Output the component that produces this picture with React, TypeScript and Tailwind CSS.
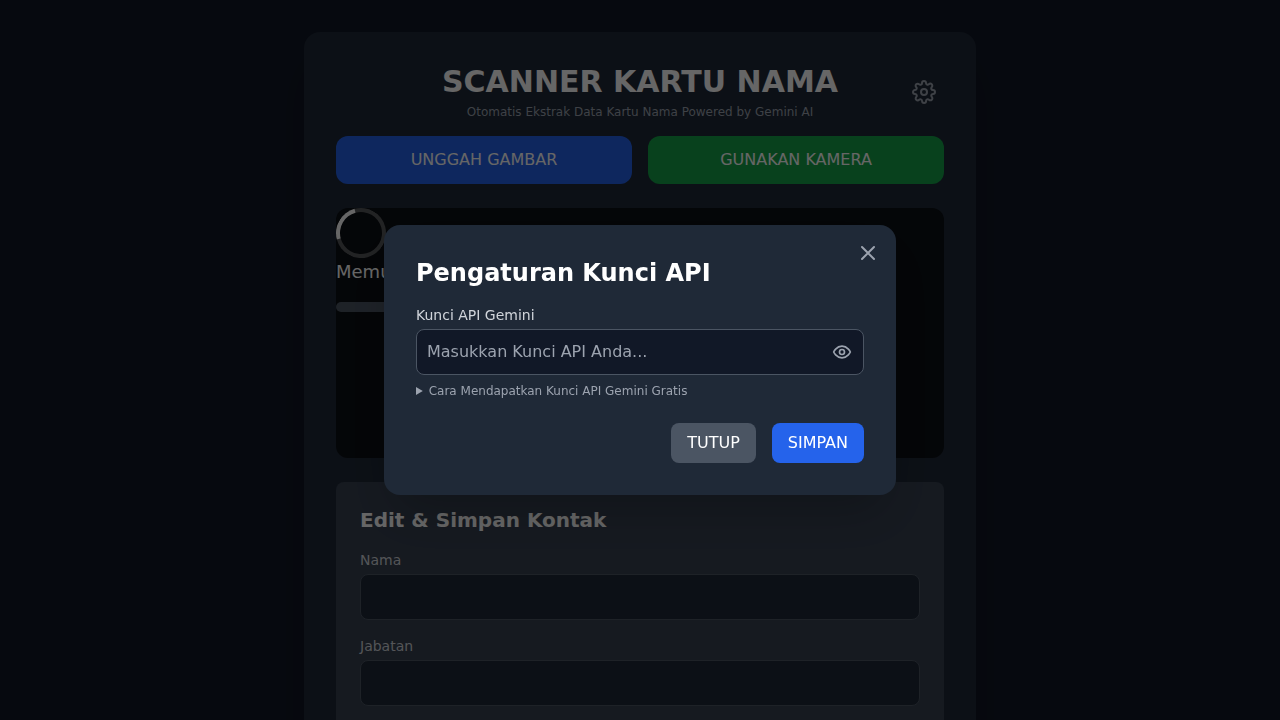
import React from "react";

type IconProps = { className: string; paths: string[] };

function Icon({ className, paths }: IconProps) {
  return (
    <svg className={className} fill="none" viewBox="0 0 24 24" stroke="currentColor" strokeWidth={2} strokeLinecap="round" strokeLinejoin="round">
      {paths.map((d) => (
        <path key={d} d={d} />
      ))}
    </svg>
  );
}

const GEAR = [
  "M15 12a3 3 0 11-6 0 3 3 0 016 0z",
  "M19.4 15a1.65 1.65 0 0 0 .33 1.82l.06.06a2 2 0 0 1 0 2.83 2 2 0 0 1-2.83 0l-.06-.06a1.65 1.65 0 0 0-1.82-.33 1.65 1.65 0 0 0-1 1.51V21a2 2 0 0 1-2 2 2 2 0 0 1-2-2v-.09A1.65 1.65 0 0 0 9 19.4a1.65 1.65 0 0 0-1.82.33l-.06.06a2 2 0 0 1-2.83 0 2 2 0 0 1 0-2.83l.06-.06a1.65 1.65 0 0 0 .33-1.82 1.65 1.65 0 0 0-1.51-1H3a2 2 0 0 1-2-2 2 2 0 0 1 2-2h.09A1.65 1.65 0 0 0 4.6 9a1.65 1.65 0 0 0-.33-1.82l-.06-.06a2 2 0 0 1 0-2.83 2 2 0 0 1 2.83 0l.06.06a1.65 1.65 0 0 0 1.82.33H9a1.65 1.65 0 0 0 1-1.51V3a2 2 0 0 1 2-2 2 2 0 0 1 2 2v.09a1.65 1.65 0 0 0 1 1.51 1.65 1.65 0 0 0 1.82-.33l.06-.06a2 2 0 0 1 2.83 0 2 2 0 0 1 0 2.83l-.06.06a1.65 1.65 0 0 0-.33 1.82V9a1.65 1.65 0 0 0 1.51 1H21a2 2 0 0 1 2 2 2 2 0 0 1-2 2h-.09a1.65 1.65 0 0 0-1.51 1z",
];
const EYE = [
  "M2 12s3-7 10-7 10 7 10 7-3 7-10 7-10-7-10-7Z",
  "M15 12a3 3 0 1 1-6 0 3 3 0 0 1 6 0Z",
];
const CLOSE = ["M6 18L18 6M6 6l12 12"];

function Field({ label }: { label: string }) {
  return (
    <div>
      <label className="mb-1 block text-sm text-[#d1d5db]">{label}</label>
      <input type="text" className="block w-full rounded-lg border border-[#4b5563] bg-[#1f2937] p-2.5" />
    </div>
  );
}

function SettingsDialog() {
  return (
    <div className="fixed inset-0 z-50 flex items-center justify-center bg-black/60 p-4">
      <div className="relative w-full max-w-lg rounded-2xl bg-[#1f2937] p-8 shadow-2xl">
        <button className="absolute top-4 right-4 text-[#9ca3af]" aria-label="Tutup">
          <Icon className="h-6 w-6" paths={CLOSE} />
        </button>
        <h2 className="mb-4 text-2xl font-bold text-white">Pengaturan Kunci API</h2>
        <label className="mb-1 block text-sm text-[#d1d5db]">Kunci API Gemini</label>
        <div className="relative">
          <input
            type="password"
            placeholder="Masukkan Kunci API Anda..."
            className="block w-full rounded-lg border border-[#4b5563] bg-[#111827] p-2.5 pr-10 text-white placeholder:text-[#9ca3af]"
          />
          <button className="absolute inset-y-0 right-0 flex items-center px-3 text-[#9ca3af]" aria-label="Tampilkan">
            <Icon className="h-5 w-5" paths={EYE} />
          </button>
        </div>
        <details className="mt-2 text-xs text-[#9ca3af]">
          <summary>Cara Mendapatkan Kunci API Gemini Gratis</summary>
        </details>
        <div className="mt-6 flex justify-end gap-4">
          <button className="rounded-lg bg-[#4b5563] px-4 py-2 text-white">TUTUP</button>
          <button className="rounded-lg bg-[#2563eb] px-4 py-2 text-white">SIMPAN</button>
        </div>
      </div>
    </div>
  );
}

export default function App() {
  return (
    <div className="h-screen overflow-hidden bg-[#111827] px-4 pt-8 font-['DejaVu_Sans',sans-serif] text-white">
      <main className="mx-auto max-w-2xl rounded-2xl bg-[#1f2937] p-8 shadow-2xl">
        <header className="relative mb-4 text-center">
          <h1 className="text-3xl font-bold">SCANNER KARTU NAMA</h1>
          <p className="mt-1 text-xs text-[#9ca3af]">Otomatis Ekstrak Data Kartu Nama Powered by Gemini AI</p>
          <button className="absolute inset-y-0 right-0 flex items-center p-2 text-[#9ca3af]" aria-label="Pengaturan">
            <Icon className="h-6 w-6" paths={GEAR} />
          </button>
        </header>
        <div className="grid grid-cols-2 gap-4">
          <button className="rounded-xl bg-[#2563eb] px-6 py-3">UNGGAH GAMBAR</button>
          <button className="rounded-xl bg-[#16a34a] px-6 py-3">GUNAKAN KAMERA</button>
        </div>
        <div className="mt-6 h-[250px] overflow-hidden rounded-xl bg-[#0c0f14]">
          <div className="h-[50px] w-[50px] rotate-[30deg] rounded-full border-4 border-white/30 border-l-white" />
          <p className="text-lg">Memuat...</p>
          <div className="mt-4 h-2.5 w-4/5 rounded-full bg-[#4b5563]" />
        </div>
        <section className="mt-6 rounded-lg bg-[#374151] p-6">
          <h2 className="mb-4 text-xl font-bold">Edit &amp; Simpan Kontak</h2>
          <div className="flex flex-col gap-4">
            <Field label="Nama" />
            <Field label="Jabatan" />
          </div>
        </section>
      </main>
      <SettingsDialog />
    </div>
  );
}
